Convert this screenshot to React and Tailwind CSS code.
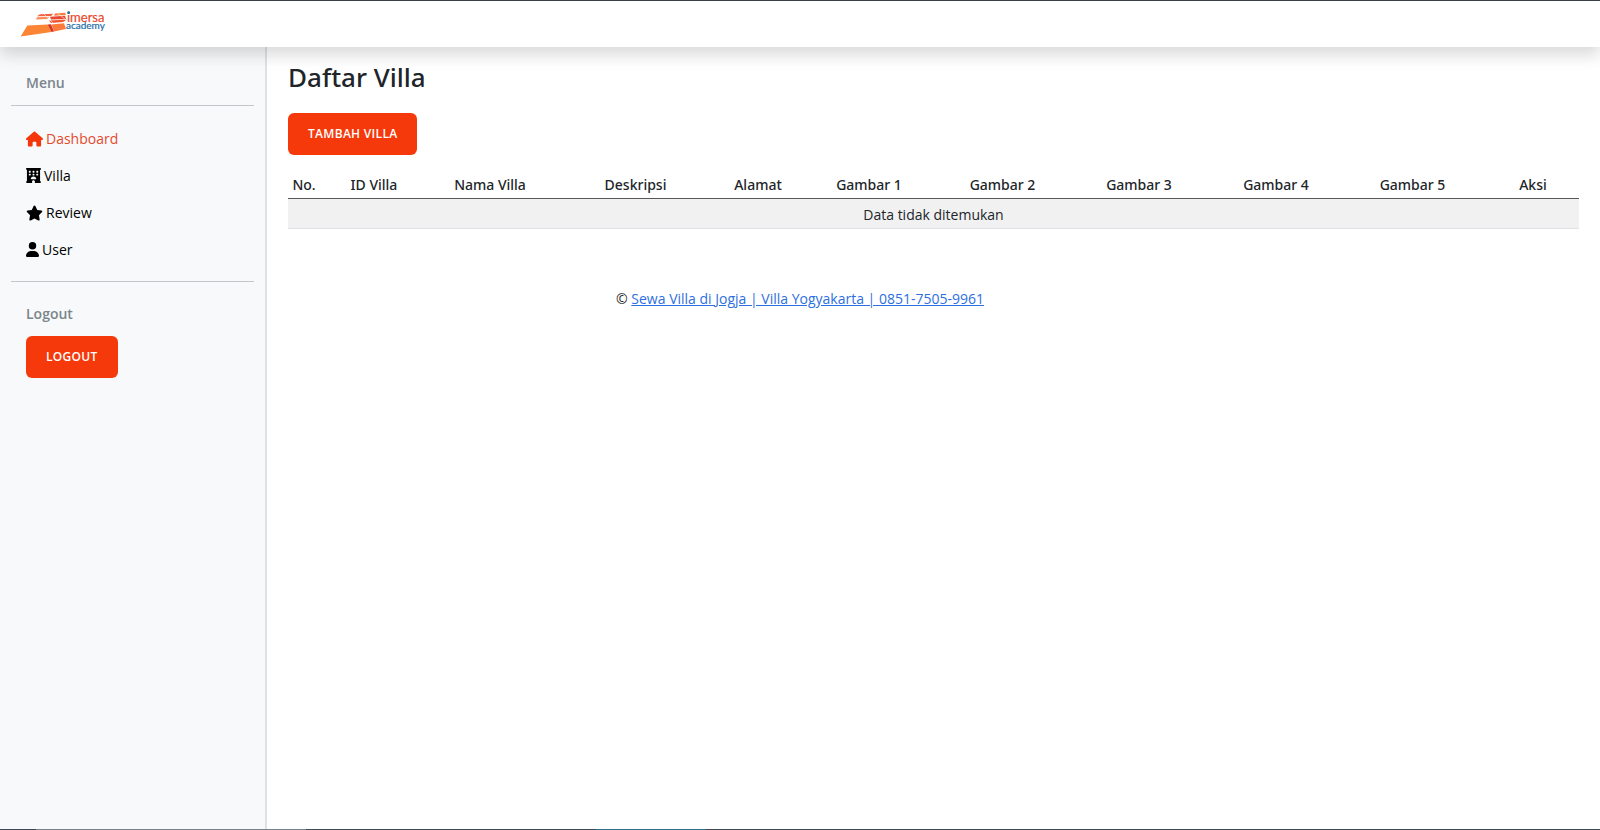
import { FaHotel, FaHouse, FaStar, FaUser } from "react-icons/fa6";

const menu = [
  { label: "Dashboard", icon: "house", active: true },
  { label: "Villa", icon: "hotel" },
  { label: "Review", icon: "star" },
  { label: "User", icon: "user" },
];

const columns = [
  { label: "No.", width: "w-[32px]" },
  { label: "ID Villa", width: "w-[108px]" },
  { label: "Nama Villa", width: "w-[124px]" },
  { label: "Deskripsi", width: "w-[167px]" },
  { label: "Alamat", width: "w-[78px]" },
  { label: "Gambar 1", width: "w-[144px]" },
  { label: "Gambar 2", width: "w-[123px]" },
  { label: "Gambar 3", width: "w-[150px]" },
  { label: "Gambar 4", width: "w-[124px]" },
  { label: "Gambar 5", width: "w-[149px]" },
  { label: "Aksi", width: "w-[92px]" },
];

function MenuIcon({ name }) {
  if (name === "hotel") return <FaHotel className="h-[15px] w-[15px]" />;
  if (name === "house") return <FaHouse className="h-4 w-[17px] text-[#f5360a]" />;
  if (name === "star") return <FaStar className="h-4 w-[17px]" />;
  return <FaUser className="h-[15px] w-[13px]" />;
}

function Logo() {
  return (
    <svg viewBox="0 0 86 28" className="h-7 w-[86px]" role="img" aria-label="imersa academy">
      <path d="M0.7 26.5 L7.3 15.5 L27.5 14.5 L31.5 22 Z" fill="#fb8435" />
      <path d="M27.5 14.5 L31 14.3 L34 21.5 L31.5 22 Z" fill="#dc3423" />
      <path d="M31.5 14.5 L44 13.2 L46 19 L34 21.5 Z" fill="#fb7a3c" />
      <path d="M20 4.3 L33.5 3.8 L31 6 L17 6.3 Z" fill="#f4603c" />
      <path d="M35 3.5 L45 2.8 L46 5 L34 5.8 Z" fill="#fb7a3c" />
      <path d="M17 7.2 L29 6.8 L27.5 9 L16 9.5 Z" fill="#fb8b55" />
      <path d="M30 6.8 L45 5.8 L46 9 L31 9.5 Z" fill="#e84731" />
      <path d="M29 10.5 L47 9.5 L43 12 L31 13 Z" fill="#f0562f" />
      <path d="M24 4 L34 14 M38 3.5 L46 10" stroke="#fff" strokeWidth="0.6" fill="none" />
      <text x="47" y="12" fontFamily="Lato, sans-serif" fontSize="13" fill="#e8492c" stroke="#e8492c" strokeWidth="0.2">imersa</text>
      <circle cx="48.7" cy="2.7" r="1.4" fill="#1d6da5" />
      <text x="46" y="19" fontFamily="Lato, sans-serif" fontSize="10" fill="#1d6da5" stroke="#1d6da5" strokeWidth="0.2">academy</text>
    </svg>
  );
}

function ActionButton({ children }) {
  return (
    <button
      type="button"
      className="block h-[42px] rounded-md bg-[#f5390b] px-5 text-xs font-semibold tracking-wide text-white uppercase"
    >
      {children}
    </button>
  );
}

export default function App() {
  return (
    <div className="flex min-h-screen flex-col bg-white font-['Open_Sans','Noto_Sans',sans-serif] text-sm text-[#212529]">
      <header className="relative z-10 flex h-[47px] items-center border-t border-[#3b3f4a] bg-white px-5 shadow-[0_8px_16px_rgba(0,0,0,0.15)]">
        <a href="#home">
          <Logo />
        </a>
      </header>

      <div className="flex grow">
        <aside className="w-[267px] shrink-0 border-r-2 border-[#dee2e6] bg-[#f8f9fa] px-[11px] pt-6">
          <h2 className="px-[15px] leading-6 font-semibold text-[#7b858c]">Menu</h2>
          <hr className="mt-[10px] border-[#c4c7ca]" />
          <nav className="mt-[14px] px-[15px]">
            <ul>
              {menu.map((item) => (
                <li key={item.label}>
                  <a
                    href={"#" + item.label.toLowerCase()}
                    className={
                      item.active
                        ? "flex h-[37px] items-center gap-[3px] text-[#e5492d]"
                        : "flex h-[37px] items-center gap-[3px] text-black"
                    }
                  >
                    <MenuIcon name={item.icon} />
                    {item.label}
                  </a>
                </li>
              ))}
            </ul>
          </nav>
          <hr className="mt-[13px] border-[#c4c7ca]" />
          <div className="px-[15px] pt-5">
            <h2 className="mb-[10px] leading-6 font-semibold text-[#7b858c]">Logout</h2>
            <ActionButton>Logout</ActionButton>
          </div>
        </aside>

        <main className="min-w-0 grow px-[21px] pt-3">
          <h1 className="mb-[18px] font-['Noto_Sans',sans-serif] text-[26px] leading-9 font-medium">Daftar Villa</h1>
          <ActionButton>Tambah Villa</ActionButton>

          <table className="mt-[14px] w-full table-fixed border-collapse text-center leading-5">
            <thead>
              <tr className="h-[29px] border-b border-[#55585b]">
                {columns.map((column) => (
                  <th
                    key={column.label}
                    scope="col"
                    className={column.width + " p-0 pt-1 font-['Noto_Sans',sans-serif] font-medium whitespace-nowrap"}
                  >
                    {column.label}
                  </th>
                ))}
              </tr>
            </thead>
            <tbody>
              <tr className="h-[30px] border-b border-[#dee2e6] bg-[#f1f1f1]">
                <td colSpan={columns.length} className="pt-1">
                  Data tidak ditemukan
                </td>
              </tr>
            </tbody>
          </table>

          <footer className="mt-[58px] pr-[267px] text-center leading-6">
            ©{" "}
            <a href="#sewa-villa" className="text-[#2d6fe0] underline">
              Sewa Villa di Jogja | Villa Yogyakarta | 0851-7505-9961
            </a>
          </footer>
        </main>
      </div>
      <div className="flex h-px bg-[#3e4a55]">
        <div className="ml-9 w-[270px] bg-[#76828c]" />
        <div className="ml-[290px] w-[110px] bg-[#2f6f8c]" />
      </div>
    </div>
  );
}
